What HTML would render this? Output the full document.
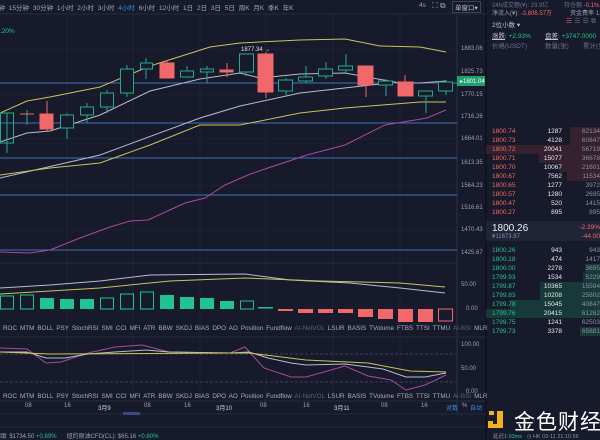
<!DOCTYPE html>
<html><head><meta charset="utf-8"><style>
*{margin:0;padding:0;box-sizing:border-box}
body{width:600px;height:439px;overflow:hidden;background:#171a2a;font-family:"Liberation Sans","Noto Sans CJK SC",sans-serif;color:#9aa0b4;position:relative}
.a{position:absolute;white-space:nowrap}
.t{font-size:6.5px}
.ob{position:absolute;left:486px;width:114px;height:9px;font-size:6.5px}
.ob span{position:absolute;top:1px}
.p{left:6px}.q{right:38px;color:#e8e8ee;text-align:right}.c{right:0;text-align:right;color:#8a90a2}
.r .p{color:#f0686a}.g .p{color:#20c48e}
</style></head><body>
<svg class="a" style="left:0;top:0" width="600" height="439">
<g stroke="#222740" stroke-width="0.6">
<line x1="67" y1="14" x2="67" y2="400"/><line x1="133" y1="14" x2="133" y2="400"/><line x1="200" y1="14" x2="200" y2="400"/><line x1="266" y1="14" x2="266" y2="400"/><line x1="333" y1="14" x2="333" y2="400"/><line x1="400" y1="14" x2="400" y2="400"/>
<line x1="0" y1="49" x2="457" y2="49"/><line x1="0" y1="95" x2="457" y2="95"/><line x1="0" y1="139" x2="457" y2="139"/><line x1="0" y1="186" x2="457" y2="186"/><line x1="0" y1="230" x2="457" y2="230"/>
</g>
<line x1="457" y1="14" x2="457" y2="414" stroke="#2a3048"/>
<line x1="486" y1="0" x2="486" y2="439" stroke="#0f1220" stroke-width="2"/>
<line x1="0" y1="14" x2="486" y2="14" stroke="#262b40"/>
<line x1="0" y1="263" x2="457" y2="263" stroke="#262b40"/>
<line x1="0" y1="337" x2="486" y2="337" stroke="#262b40"/>
<line x1="0" y1="401" x2="486" y2="401" stroke="#262b40"/>
<line x1="0" y1="414" x2="486" y2="414" stroke="#262b40"/>
<line x1="0" y1="427" x2="486" y2="427" stroke="#262b40"/>
<g stroke="#3f73b8" stroke-width="1"><line x1="0" y1="83" x2="457" y2="83"/><line x1="0" y1="123" x2="457" y2="123"/><line x1="0" y1="158" x2="457" y2="158"/><line x1="0" y1="195" x2="457" y2="195"/><line x1="0" y1="250" x2="457" y2="250"/></g>
<g fill="none" stroke-width="1">
<polyline stroke="#c8c45a" points="0,113 27,101 50,97 100,87 150,66 210,47 240,43 300,40 345,39 380,46 420,47 446,52"/>
<polyline stroke="#b8bcd0" points="0,142 27,133 50,131 100,115 150,91 200,79 240,73 260,78 300,74 345,73 400,83 420,83 446,81"/>
<polyline stroke="#b8bcd0" points="0,178 100,155 200,118 240,106 300,93 380,84"/>
<polyline stroke="#c8c45a" points="0,175 50,168 100,163 150,145 200,125 240,125 300,113 345,108 420,102 446,102"/>
<polyline stroke="#a64aa0" points="0,252 30,253 50,250 80,238 110,227 130,221 148,220 185,203 205,198 225,185 248,175 262,170 307,155 345,145 385,125 427,118 446,110"/>
</g>
<g stroke="#26a98a" fill="none" stroke-width="1">
<line x1="7" y1="113" x2="7" y2="153"/><rect x="0.5" y="113" width="13" height="30"/>
<line x1="27" y1="110" x2="27" y2="125"/><line x1="20" y1="114" x2="34" y2="114" stroke="#e8686a"/>
<line x1="67" y1="113" x2="67" y2="139"/><rect x="60.5" y="115" width="13" height="13" fill="#171a2a"/>
<line x1="87" y1="103" x2="87" y2="123"/><rect x="80.5" y="107" width="13" height="8" fill="#171a2a"/>
<line x1="107" y1="90" x2="107" y2="113"/><rect x="100.5" y="93" width="13" height="14" fill="#171a2a"/>
<line x1="127" y1="65" x2="127" y2="97"/><rect x="120.5" y="69" width="13" height="24" fill="#171a2a"/>
<line x1="146" y1="58" x2="146" y2="79"/><rect x="140.5" y="63" width="12" height="6" fill="#171a2a"/>
<line x1="187" y1="66" x2="187" y2="78"/><rect x="180.5" y="71" width="13" height="6" fill="#171a2a"/>
<line x1="207" y1="66" x2="207" y2="83"/><rect x="200.5" y="69" width="13" height="3" fill="#171a2a"/>
<line x1="246" y1="54" x2="246" y2="76"/><rect x="239.5" y="54" width="14" height="18" fill="#171a2a"/>
<line x1="286" y1="78" x2="286" y2="95"/><rect x="278.5" y="80" width="14" height="11" fill="#171a2a"/>
<line x1="306" y1="66" x2="306" y2="83"/><rect x="298.5" y="77" width="14" height="4" fill="#171a2a"/>
<line x1="326" y1="62" x2="326" y2="79"/><rect x="318.5" y="69" width="14" height="7" fill="#171a2a"/>
<line x1="346" y1="54" x2="346" y2="74"/><rect x="338.5" y="66" width="14" height="4" fill="#171a2a"/>
<line x1="386" y1="79" x2="386" y2="96"/><rect x="378.5" y="81" width="14" height="4" fill="#171a2a"/>
<line x1="426" y1="91" x2="426" y2="113"/><rect x="418.5" y="91" width="14" height="5" fill="#171a2a"/>
<line x1="446" y1="80" x2="446" y2="95"/><rect x="438.5" y="82" width="14" height="9" fill="#171a2a"/>
</g>
<g fill="#f0686a" stroke="#f0686a">
<line x1="47" y1="101" x2="47" y2="132"/><rect x="40" y="114" width="13" height="15"/>
<line x1="167" y1="60" x2="167" y2="78"/><rect x="160" y="63" width="14" height="15"/>
<line x1="227" y1="63" x2="227" y2="77"/><rect x="220" y="70" width="13" height="2"/>
<line x1="266" y1="52" x2="266" y2="98"/><rect x="258" y="54" width="15" height="38"/>
<line x1="366" y1="66" x2="366" y2="97"/><rect x="358" y="66" width="15" height="19"/>
<line x1="405" y1="75" x2="405" y2="96"/><rect x="398" y="82" width="15" height="14"/>
</g>
<polyline fill="none" stroke="#b8bcd0" points="0,288 50,285 100,281 150,275 245,274 290,280 350,283 400,288 445,293"/>
<polyline fill="none" stroke="#c8c45a" points="0,294 100,288 170,281 245,278 320,281 400,283 445,287"/>
<g stroke="#1fc491" fill="none"><rect x="0.5" y="296" width="13" height="13"/><rect x="20.5" y="295" width="13" height="14"/><rect x="100.5" y="298" width="13" height="11"/><rect x="120.5" y="294" width="13" height="15"/><rect x="140.5" y="292" width="13" height="17"/><rect x="240.5" y="301" width="13" height="8"/></g>
<g fill="#1fc491"><rect x="40" y="298" width="14" height="11"/><rect x="60" y="299" width="14" height="10"/><rect x="80" y="299" width="14" height="10"/><rect x="160" y="295" width="14" height="14"/><rect x="180" y="297" width="14" height="12"/><rect x="200" y="298" width="14" height="11"/><rect x="220" y="301" width="14" height="8"/><rect x="258" y="307" width="15" height="1.5"/></g>
<g fill="#f0686a"><rect x="278" y="309" width="15" height="2"/><rect x="298" y="309" width="15" height="4"/><rect x="318" y="309" width="15" height="4"/><rect x="338" y="309" width="15" height="4"/><rect x="358" y="309" width="15" height="8"/><rect x="378" y="309" width="15" height="10"/><rect x="398" y="309" width="15" height="13"/><rect x="418" y="309" width="15" height="13"/></g>
<rect x="438.5" y="309" width="14" height="12" fill="none" stroke="#f0686a"/>
<g stroke="#3a4058" stroke-dasharray="3,2"><line x1="0" y1="354" x2="457" y2="354"/><line x1="0" y1="382" x2="457" y2="382"/></g>
<polyline fill="none" stroke="#a64aa0" points="0,348 27,349 46,363 61,362 88,353 115,347 142,345 169,352 230,353 245,347 264,368 291,377 306,377 345,366 368,376 391,380 406,390 425,385 446,375"/>
<polyline fill="none" stroke="#b8bcd0" points="0,352 27,352 46,358 65,358 88,354 115,352 146,350 169,352 230,353 249,352 268,358 291,363 306,365 345,364 368,367 383,369 406,377 425,377 446,373"/>
<polyline fill="none" stroke="#c8c45a" points="0,352 50,354 230,353 249,353 306,360 368,363 410,371 446,372"/>
<rect x="123" y="412" width="17" height="3" fill="#3a4a7a"/>
<g fill="#3a2230" opacity="0.9"><rect x="570" y="127" width="30" height="9"/><rect x="570" y="136" width="30" height="9"/><rect x="486" y="145" width="114" height="9"/><rect x="539" y="154" width="61" height="9"/><rect x="559" y="163" width="41" height="9"/><rect x="567" y="172" width="33" height="9"/></g>
<g fill="#173a38"><rect x="585" y="264" width="15" height="9"/><rect x="583" y="273" width="17" height="9"/><rect x="540" y="282" width="60" height="9"/><rect x="540" y="291" width="60" height="9"/><rect x="510" y="300" width="90" height="9"/><rect x="486" y="309" width="114" height="9"/><rect x="580" y="327" width="20" height="9"/></g>
<rect x="486" y="221" width="114" height="20" fill="#1f2437"/>
<path d="M497 411 h6 v17 h-15 v-7 h5 v3 h4z" fill="#f2b21a"/><rect x="489" y="411" width="5" height="4" fill="#f2b21a"/>
</svg>
<div class="a t" style="left:-8px;top:2px;color:#a0a6ba;word-spacing:2px">分钟 15分钟 30分钟 1小时 2小时 3小时 <span style="color:#3d8cf0">4小时</span> 6小时 12小时 1日 2日 3日 5日 周K 月K 季K 年K</div>
<div class="a t" style="left:419px;top:2px">4s</div>
<div class="a t" style="left:432px;top:1px;font-size:8px">⛶ ⧉</div>
<div class="a t" style="left:452px;top:1px;border:1px solid #3a4260;padding:0 2px;color:#c0c4d4">单窗口▾</div>
<div class="a t" style="left:0;top:28px;color:#20c48e">.20%</div>
<div class="a t" style="left:241px;top:47px;color:#e0e0e8;font-size:6px">1877.34 →</div>
<div class="a t" style="left:461px;top:46px;font-size:6px">1883.06</div>
<div class="a t" style="left:461px;top:69px;font-size:6px">1825.73</div>
<div class="a t" style="left:457px;top:76px;width:28px;height:10px;background:#1fa06e;color:#fff;font-size:6px;padding:2px 0 0 3px">▸1801.04</div>
<div class="a t" style="left:461px;top:92px;font-size:6px">1770.15</div>
<div class="a t" style="left:461px;top:114px;font-size:6px">1716.26</div>
<div class="a t" style="left:461px;top:136px;font-size:6px">1664.01</div>
<div class="a t" style="left:461px;top:160px;font-size:6px">1613.35</div>
<div class="a t" style="left:461px;top:183px;font-size:6px">1564.23</div>
<div class="a t" style="left:461px;top:205px;font-size:6px">1516.61</div>
<div class="a t" style="left:461px;top:227px;font-size:6px">1470.43</div>
<div class="a t" style="left:461px;top:250px;font-size:6px">1425.67</div>
<div class="a t" style="left:461px;top:282px;font-size:6px">50.00</div>
<div class="a t" style="left:466px;top:306px;font-size:6px">0.00</div>
<div class="a t" style="left:461px;top:342px;font-size:6px">100.00</div>
<div class="a t" style="left:461px;top:366px;font-size:6px">50.00</div>
<div class="a t" style="left:466px;top:389px;font-size:6px">0.00</div>
<div class="a t" style="left:3px;top:325px;font-size:6.3px;word-spacing:1.3px;color:#a8aec0">ROC MTM BOLL PSY StochRSI SMI CCI MFI ATR BBW SKDJ BIAS DPO AO Position Fundflow <span style="color:#5a6078">AI-NetVOL</span> LSUR BASIS TVolume FTBS TTSI TTMU <span style="color:#5a6078">AI-BSI</span> MLR</div>
<div class="a t" style="left:3px;top:393px;font-size:6.3px;word-spacing:1.3px;color:#a8aec0">ROC MTM BOLL PSY StochRSI SMI CCI MFI ATR BBW SKDJ BIAS DPO AO Position Fundflow <span style="color:#5a6078">AI-NetVOL</span> LSUR BASIS TVolume FTBS TTSI TTMU <span style="color:#5a6078">AI-BSI</span> MLR</div>
<div class="a t" style="left:0;top:403px;width:486px;font-size:6px">
<span class="a" style="left:25px">08</span><span class="a" style="left:64px">16</span><span class="a" style="left:98px;color:#d0d4e0">3月9</span><span class="a" style="left:144px">08</span><span class="a" style="left:184px">16</span><span class="a" style="left:216px;color:#d0d4e0">3月10</span><span class="a" style="left:260px">08</span><span class="a" style="left:303px">16</span><span class="a" style="left:334px;color:#d0d4e0">3月11</span><span class="a" style="left:381px">08</span><span class="a" style="left:421px">16</span><span class="a" style="left:446px;color:#3d8cf0">对数</span><span class="a" style="left:462px">%</span><span class="a" style="left:470px;color:#3d8cf0">自动</span></div>
<div class="a t" style="left:0;top:431px;font-size:6px">頭: $1734.50 <span style="color:#20c48e">+0.89%</span> &nbsp;&nbsp;&nbsp;&nbsp; 纽约原油CFD(CL): $65.16 <span style="color:#20c48e">+0.80%</span></div>
<div class="a t" style="left:492px;top:0;font-size:6px;color:#6a7088">24h成交额(¥): 23.9亿 <span style="margin-left:14px">持仓额 </span><span style="color:#f0686a">-0.1%</span></div>
<div class="a t" style="left:492px;top:8px;font-size:6px">净流入(¥): <span style="color:#f0686a">-3,806.57万</span><span style="margin-left:18px">资金费率 1.78%</span></div>
<div class="a t" style="left:492px;top:19px;color:#c0c4d4">2位小数 ▾</div>
<div class="a" style="left:566px;top:17px;font-size:7px;color:#6a7088;letter-spacing:2px"><span style="color:#d0606a">☰</span>☰☰⧉</div>
<div class="a t" style="left:492px;top:30px;color:#c0c4d4"><u>涨跌</u>: <span style="color:#20c48e">+2.93%</span></div>
<div class="a t" style="left:545px;top:30px;color:#c0c4d4"><u>盘差</u>: <span style="color:#20c48e">+3747.0000</span></div>
<div class="a t" style="left:492px;top:40px;color:#6a7088">价格(USDT)</div>
<div class="a t" style="left:545px;top:40px;color:#6a7088">数量(张)</div>
<div class="a t" style="left:583px;top:40px;color:#6a7088">累计(张</div>
<div class="ob r" style="top:127px"><span class="p">1800.74</span><span class="q">1287</span><span class="c">62134</span></div>
<div class="ob r" style="top:136px"><span class="p">1800.73</span><span class="q">4128</span><span class="c">60847</span></div>
<div class="ob r" style="top:145px"><span class="p">1800.72</span><span class="q">20041</span><span class="c">56719</span></div>
<div class="ob r" style="top:154px"><span class="p">1800.71</span><span class="q">15077</span><span class="c">36678</span></div>
<div class="ob r" style="top:163px"><span class="p">1800.70</span><span class="q">10067</span><span class="c">21601</span></div>
<div class="ob r" style="top:172px"><span class="p">1800.67</span><span class="q">7562</span><span class="c">11534</span></div>
<div class="ob r" style="top:181px"><span class="p">1800.65</span><span class="q">1277</span><span class="c">3972</span></div>
<div class="ob r" style="top:190px"><span class="p">1800.57</span><span class="q">1280</span><span class="c">2695</span></div>
<div class="ob r" style="top:199px"><span class="p">1800.47</span><span class="q">520</span><span class="c">1415</span></div>
<div class="ob r" style="top:208px"><span class="p">1800.27</span><span class="q">895</span><span class="c">895</span></div>
<div class="a" style="left:492px;top:223px;font-size:10px;color:#f0f0f4">1800.26</div>
<div class="a" style="left:492px;top:234px;font-size:6px;color:#8a90a2">¥11673.97</div>
<div class="a" style="right:0;top:224px;font-size:6.5px;color:#f0686a">-2.39%</div>
<div class="a" style="right:0;top:233px;font-size:6.5px;color:#f0686a">-44.00</div>
<div class="ob g" style="top:246px"><span class="p">1800.26</span><span class="q">943</span><span class="c">943</span></div>
<div class="ob g" style="top:255px"><span class="p">1800.18</span><span class="q">474</span><span class="c">1417</span></div>
<div class="ob g" style="top:264px"><span class="p">1800.00</span><span class="q">2278</span><span class="c">3695</span></div>
<div class="ob g" style="top:273px"><span class="p">1799.93</span><span class="q">1534</span><span class="c">5229</span></div>
<div class="ob g" style="top:282px"><span class="p">1799.87</span><span class="q">10365</span><span class="c">15594</span></div>
<div class="ob g" style="top:291px"><span class="p">1799.83</span><span class="q">10208</span><span class="c">25802</span></div>
<div class="ob g" style="top:300px"><span class="p">1799.78</span><span class="q">15045</span><span class="c">40847</span></div>
<div class="ob g" style="top:309px"><span class="p">1799.76</span><span class="q">20415</span><span class="c">61262</span></div>
<div class="ob g" style="top:318px"><span class="p">1799.75</span><span class="q">1241</span><span class="c">62503</span></div>
<div class="ob g" style="top:327px"><span class="p">1799.73</span><span class="q">3378</span><span class="c">65881</span></div>
<div class="a" style="left:514px;top:406px;font-size:21px;color:#fff;letter-spacing:1px;font-family:'Noto Sans CJK SC',sans-serif">金色财经</div>
<div class="a" style="left:493px;top:432px;font-size:5.5px;color:#8a90a2">延迟1:<span style="color:#20c48e">93ms</span> &nbsp; ◷ HK 03-11 21:10:56</div>
</body></html>
